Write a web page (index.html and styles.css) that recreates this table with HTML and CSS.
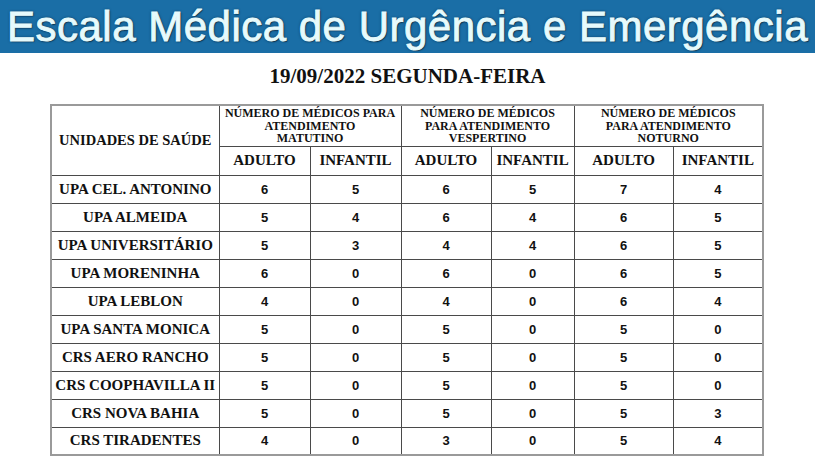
FILE: index.html
```html
<!DOCTYPE html>
<html lang="pt">
<head>
<meta charset="utf-8">
<link rel="stylesheet" href="styles.css">
</head>
<body>
<header class="banner"><h1 class="banner-title">Escala Médica de Urgência e Emergência</h1></header>
<h2 class="date">19/09/2022 SEGUNDA-FEIRA</h2>
<table class="scale">
<colgroup>
<col class="c-unit"><col class="c-91"><col class="c-91"><col class="c-90"><col class="c-83"><col class="c-99"><col class="c-90">
</colgroup>
<thead>
<tr class="h1">
<th rowspan="2" class="unit-h">UNIDADES DE SAÚDE</th>
<th colspan="2" class="grp">NÚMERO DE MÉDICOS PARA<br>ATENDIMENTO<br>MATUTINO</th>
<th colspan="2" class="grp">NÚMERO DE MÉDICOS<br>PARA ATENDIMENTO<br>VESPERTINO</th>
<th colspan="2" class="grp">NÚMERO DE MÉDICOS<br>PARA ATENDIMENTO<br>NOTURNO</th>
</tr>
<tr class="h2">
<th>ADULTO</th><th>INFANTIL</th><th>ADULTO</th><th>INFANTIL</th><th>ADULTO</th><th>INFANTIL</th>
</tr>
</thead>
<tbody>
<tr><th>UPA CEL. ANTONINO</th><td>6</td><td>5</td><td>6</td><td>5</td><td>7</td><td>4</td></tr>
<tr><th>UPA ALMEIDA</th><td>5</td><td>4</td><td>6</td><td>4</td><td>6</td><td>5</td></tr>
<tr><th>UPA UNIVERSITÁRIO</th><td>5</td><td>3</td><td>4</td><td>4</td><td>6</td><td>5</td></tr>
<tr><th>UPA MORENINHA</th><td>6</td><td>0</td><td>6</td><td>0</td><td>6</td><td>5</td></tr>
<tr><th>UPA LEBLON</th><td>4</td><td>0</td><td>4</td><td>0</td><td>6</td><td>4</td></tr>
<tr><th>UPA SANTA MONICA</th><td>5</td><td>0</td><td>5</td><td>0</td><td>5</td><td>0</td></tr>
<tr><th>CRS AERO RANCHO</th><td>5</td><td>0</td><td>5</td><td>0</td><td>5</td><td>0</td></tr>
<tr><th>CRS COOPHAVILLA II</th><td>5</td><td>0</td><td>5</td><td>0</td><td>5</td><td>0</td></tr>
<tr><th>CRS NOVA BAHIA</th><td>5</td><td>0</td><td>5</td><td>0</td><td>5</td><td>3</td></tr>
<tr><th>CRS TIRADENTES</th><td>4</td><td>0</td><td>3</td><td>0</td><td>5</td><td>4</td></tr>
</tbody>
</table>
</body>
</html>
```
FILE: styles.css
```css
html, body {
  margin: 0;
  padding: 0;
  background: #ffffff;
}
body {
  width: 815px;
  height: 464px;
  overflow: hidden;
  font-family: "Liberation Serif", "Times New Roman", serif;
  color: #111;
}
.banner {
  height: 53px;
  background: #1a6ea6;
  display: flex;
  align-items: center;
  justify-content: center;
  overflow: hidden;
}
.banner-title {
  margin: 0;
  font-family: "Liberation Sans", Arial, sans-serif;
  font-weight: normal;
  font-size: 42px;
  line-height: 53px;
  letter-spacing: 0.5px;
  color: #e6fafc;
  -webkit-text-stroke: 0.9px #e6fafc;
  text-shadow: 1px 1px 1px #0a2f4a, 0 0 3px #0a2f4a;
  white-space: nowrap;
}
.date {
  margin: 11px 0 0;
  text-align: center;
  font-size: 21px;
  line-height: 24px;
  font-weight: bold;
  color: #111;
}
.scale {
  margin: 16px 0 0 50px;
  width: 712px;
  border-collapse: collapse;
  table-layout: fixed;
  border: 2px solid #9a9a9a;
}
.c-unit { width: 168px; }
.c-91 { width: 91px; }
.c-90 { width: 90px; }
.c-83 { width: 83px; }
.c-99 { width: 99px; }
.scale th, .scale td {
  border: 1px solid #4a4a4a;
  padding: 0;
  text-align: center;
  vertical-align: middle;
}
.h1 { height: 41px; }
.h2 { height: 29px; }
.grp {
  font-size: 12px;
  line-height: 12.5px;
  font-weight: bold;
}
.unit-h {
  font-size: 14.5px;
  font-weight: bold;
}
.h2 th {
  font-size: 15px;
  font-weight: bold;
}
.scale tbody tr { height: 28px; }
.scale tbody th {
  font-size: 15px;
  font-weight: bold;
  white-space: nowrap;
}
.scale tbody td {
  font-family: "Liberation Sans", Arial, sans-serif;
  font-weight: bold;
  font-size: 13px;
}
```
